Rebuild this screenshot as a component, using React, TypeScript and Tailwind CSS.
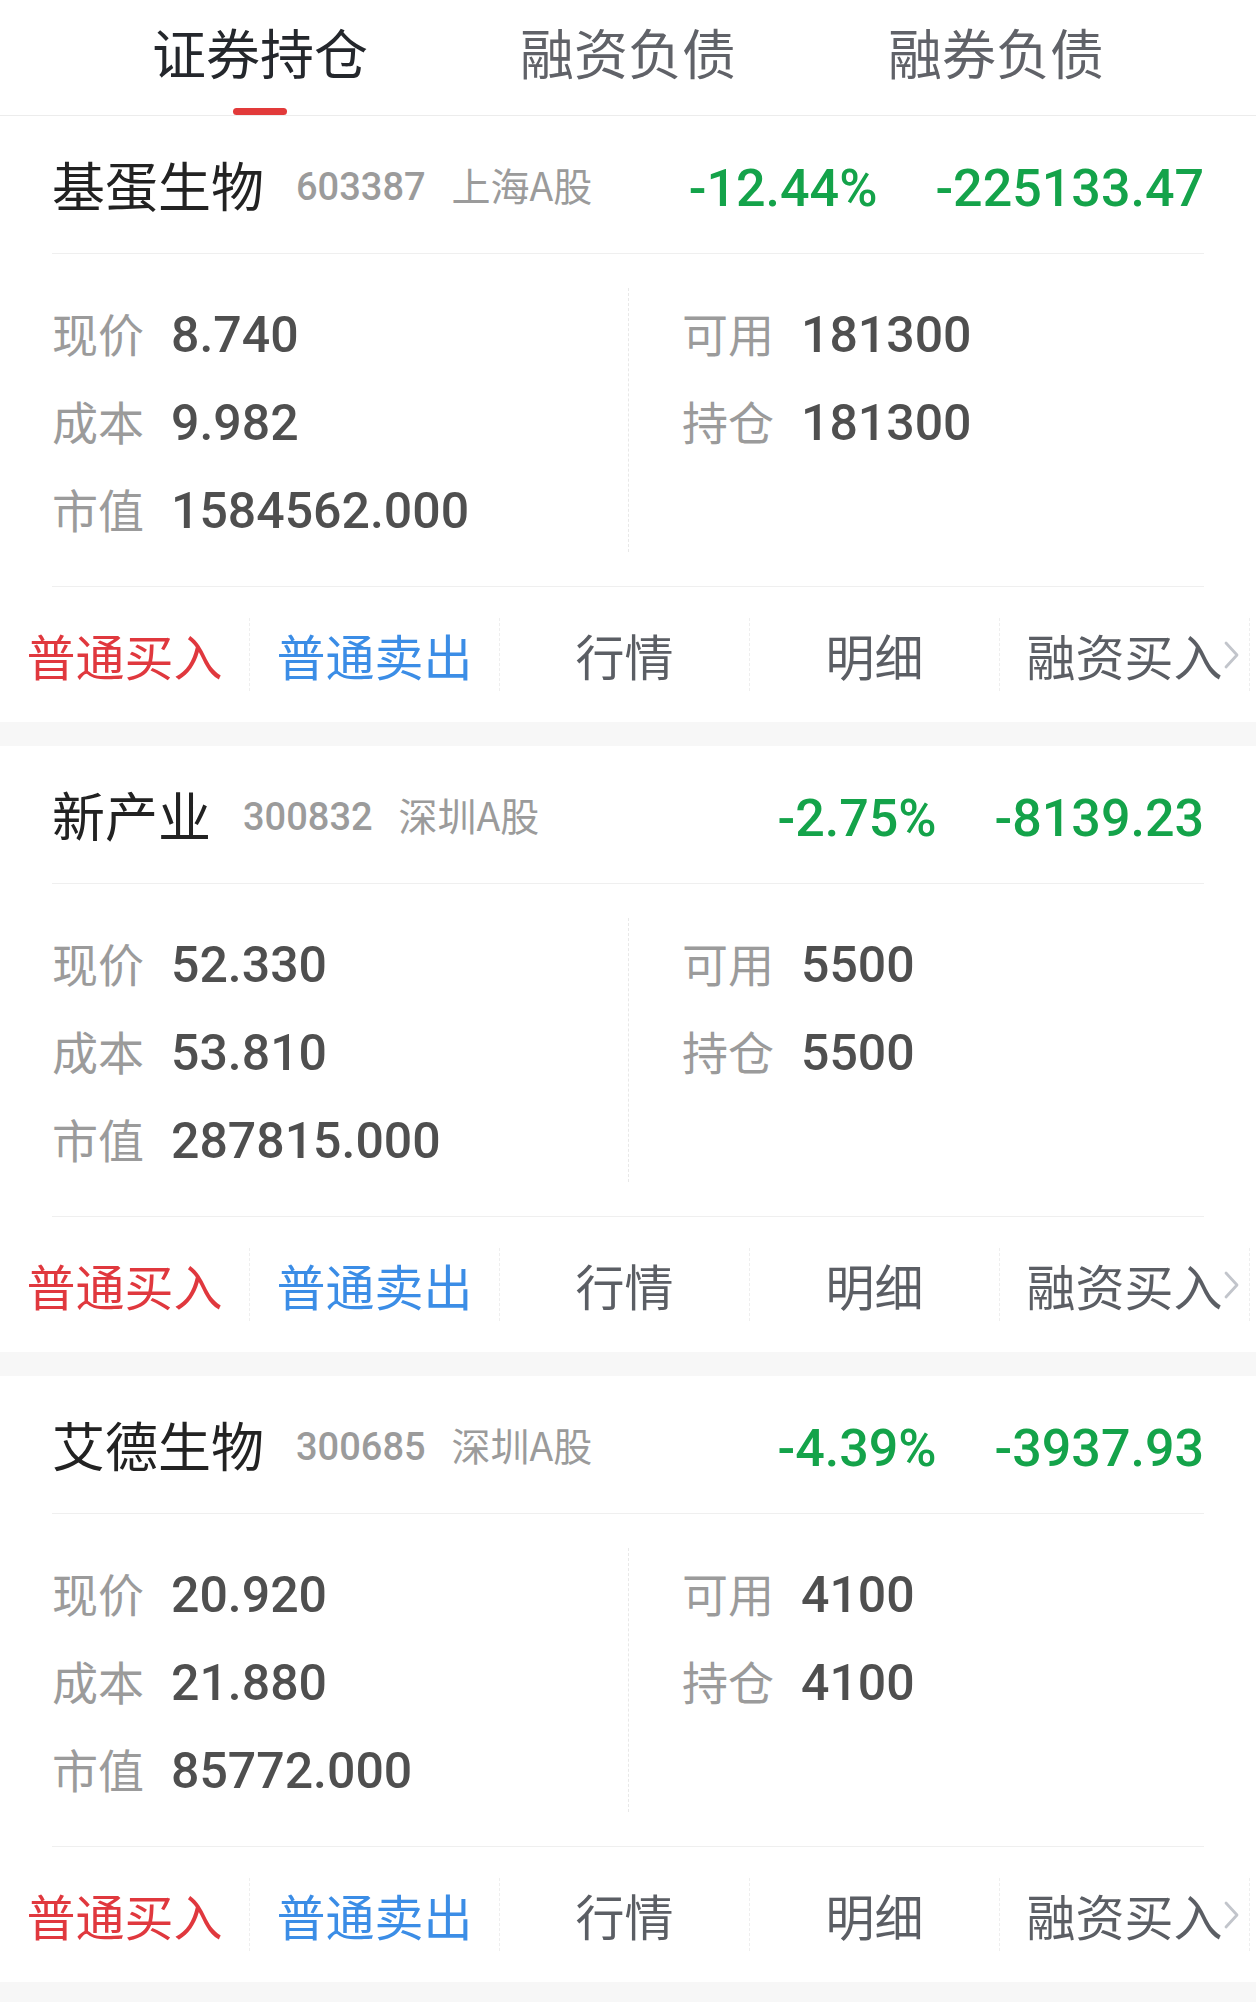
import { Fragment } from "react";

type Holding = {
  name: string;
  code: string;
  market: string;
  pct: string;
  pl: string;
  price: string;
  cost: string;
  value: string;
  avail: string;
  pos: string;
};

const holdings: Holding[] = [
  { name: "基蛋生物", code: "603387", market: "上海A股", pct: "-12.44%", pl: "-225133.47", price: "8.740", cost: "9.982", value: "1584562.000", avail: "181300", pos: "181300" },
  { name: "新产业", code: "300832", market: "深圳A股", pct: "-2.75%", pl: "-8139.23", price: "52.330", cost: "53.810", value: "287815.000", avail: "5500", pos: "5500" },
  { name: "艾德生物", code: "300685", market: "深圳A股", pct: "-4.39%", pl: "-3937.93", price: "20.920", cost: "21.880", value: "85772.000", avail: "4100", pos: "4100" },
];

const tabs = ["证券持仓", "融资负债", "融券负债"];

function Row({ label, value }: { label: string; value: string }) {
  return (
    <div className="flex h-[88px] items-center">
      <span className="w-[92px] text-[46px] leading-none text-[#9b9b9b]">{label}</span>
      <span className="relative top-[3px] ml-[27px] font-[Roboto,sans-serif] text-[50px] font-medium leading-none text-[#4f4f4f]">
        {value}
      </span>
    </div>
  );
}

function HoldingCard({ h }: { h: Holding }) {
  return (
    <div className="bg-white">
      <div className="px-[52px]">
        {/* title */}
        <div className="flex h-[138px] items-center border-b border-[#efefef]">
          <span className="text-[53px] leading-none text-[#222]">{h.name}</span>
          <span className="relative top-[2px] ml-[32px] font-[Roboto,sans-serif] text-[38px] font-medium leading-none text-[#9b9b9b]">
            {h.code}
          </span>
          <span className="ml-[26px] text-[39px] leading-none text-[#9b9b9b]">{h.market}</span>
          <div className="relative top-[4px] ml-auto flex gap-[58px] font-[Roboto,sans-serif] text-[52px] font-medium leading-none text-[#14a34a]">
            <span>{h.pct}</span>
            <span>{h.pl}</span>
          </div>
        </div>

        {/* numbers */}
        <div className="grid grid-cols-2 border-b border-[#efefef] py-[34px]">
          <div>
            <Row label="现价" value={h.price} />
            <Row label="成本" value={h.cost} />
            <Row label="市值" value={h.value} />
          </div>
          <div className="border-l border-dashed border-[#e8e8e8] pl-[53px]">
            <Row label="可用" value={h.avail} />
            <Row label="持仓" value={h.pos} />
          </div>
        </div>
      </div>

      {/* actions */}
      <div className="flex h-[135px] items-center">
        <div className="flex h-[73px] w-[250px] flex-none items-center justify-center border-r border-dashed border-[#eeeeee]">
          <span className="text-[49px] leading-none text-[#e0383e]">普通买入</span>
        </div>
        <div className="flex h-[73px] w-[250px] flex-none items-center justify-center border-r border-dashed border-[#eeeeee]">
          <span className="text-[49px] leading-none text-[#3b8de6]">普通卖出</span>
        </div>
        <div className="flex h-[73px] w-[250px] flex-none items-center justify-center border-r border-dashed border-[#eeeeee]">
          <span className="text-[49px] leading-none text-[#5b5e64]">行情</span>
        </div>
        <div className="flex h-[73px] w-[250px] flex-none items-center justify-center border-r border-dashed border-[#eeeeee]">
          <span className="text-[49px] leading-none text-[#5b5e64]">明细</span>
        </div>
        <div className="flex h-[73px] w-[250px] flex-none items-center justify-center border-r border-dashed border-[#eeeeee]">
          <span className="relative text-[49px] leading-none text-[#5b5e64]">
            融资买入
            <svg
              className="absolute left-full top-1/2 -translate-y-1/2"
              width="17"
              height="28"
              viewBox="0 0 17 28"
              fill="none"
            >
              <path d="M3 2 L14 14 L3 26" stroke="#c2c5cb" strokeWidth="2.8" strokeLinecap="round" strokeLinejoin="round" />
            </svg>
          </span>
        </div>
      </div>
    </div>
  );
}

export default function App() {
  return (
    <div className="min-h-screen bg-[#f7f7f7] font-['Noto_Sans_CJK_SC',sans-serif]">
      {/* top tabs */}
      <div className="grid h-[116px] grid-cols-3 border-b border-[#ececec] bg-white px-[76px]">
        {tabs.map((t, i) => (
          <div key={t} className="relative flex items-start justify-center pt-[25px]">
            <span className={`text-[54px] leading-none ${i === 0 ? "text-[#24272c]" : "text-[#606268]"}`}>{t}</span>
            {i === 0 && <span className="absolute left-1/2 top-[108px] h-[7px] w-[54px] -translate-x-1/2 rounded-full bg-[#e23a3a]" />}
          </div>
        ))}
      </div>

      {holdings.map((h, i) => (
        <Fragment key={h.code}>
          {i > 0 && <div className="h-[24px]" />}
          <HoldingCard h={h} />
        </Fragment>
      ))}
      <div className="h-[24px]" />
    </div>
  );
}
